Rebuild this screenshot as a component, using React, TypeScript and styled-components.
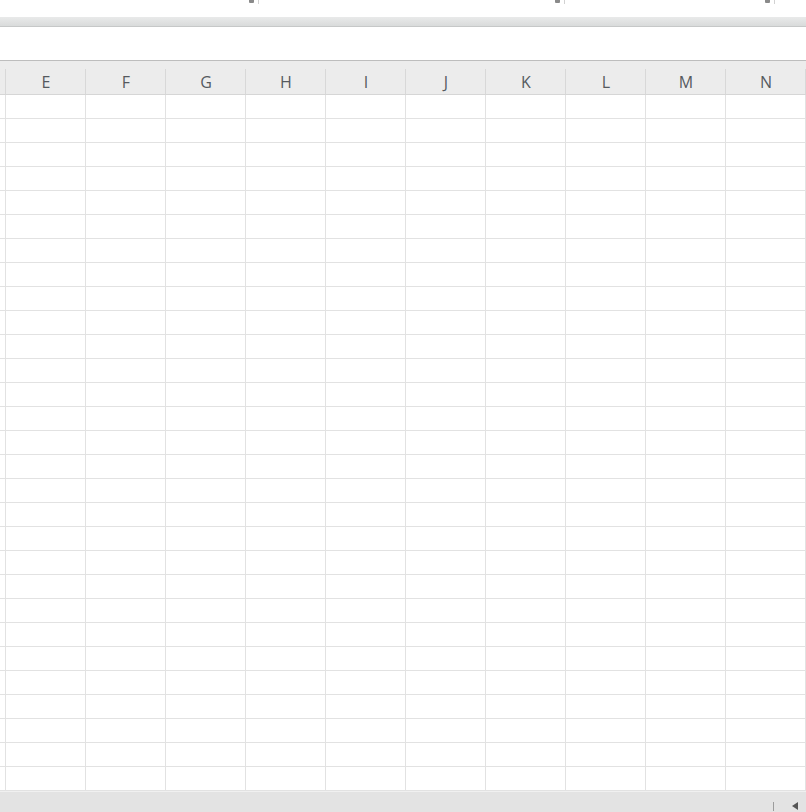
import React from "react";
import styled, { createGlobalStyle } from "styled-components";

const GlobalStyle = createGlobalStyle`
  html, body {
    margin: 0;
    padding: 0;
    background: #ffffff;
    overflow: hidden;
  }
  body {
    font-family: "Open Sans", "Liberation Sans", sans-serif;
  }
`;

const Page = styled.div`
  width: 806px;
  height: 812px;
  display: flex;
  flex-direction: column;
  overflow: hidden;
  background: #ffffff;
`;

const Ribbon = styled.div`
  height: 17px;
  display: flex;
  background: #ffffff;
`;

const RibbonGroup = styled.div<{ $w: number }>`
  width: ${(p) => p.$w}px;
  display: flex;
  justify-content: flex-end;
  align-items: flex-start;
  gap: 4px;
`;

const Launcher = styled.span`
  width: 5px;
  height: 3px;
  background: #8a8a8a;
  border-radius: 0 0 1px 1px;
`;

const GroupDivider = styled.span`
  width: 1px;
  height: 4px;
  background: #d2d2d2;
`;

const RibbonShadow = styled.div`
  height: 9px;
  background: linear-gradient(#e9eaea, #d9dbdb);
  border-bottom: 1px solid #c6c8c8;
`;

const FormulaArea = styled.div`
  height: 33px;
  background: #ffffff;
  border-bottom: 1px solid #bdbdbd;
`;

const HeaderRow = styled.div`
  display: flex;
  height: 33px;
  background: #ececec;
  border-bottom: 1px solid #d6d6d6;
`;

const HeaderStub = styled.div`
  width: 5px;
  position: relative;
  &::after {
    content: "";
    position: absolute;
    right: -1px;
    top: 8px;
    bottom: 0;
    width: 1px;
    background: #d8d8d8;
  }
`;

const HeaderCell = styled.div`
  width: 79px;
  margin-left: 1px;
  position: relative;
  display: flex;
  align-items: center;
  justify-content: center;
  padding: 8px 0 0 1px;
  box-sizing: border-box;
  font-size: 16px;
  color: #555a5f;
  font-weight: 400;
  &::after {
    content: "";
    position: absolute;
    right: -1px;
    top: 8px;
    bottom: 0;
    width: 1px;
    background: #d8d8d8;
  }
`;

const Sheet = styled.div`
  display: flex;
  flex-direction: column;
`;

const Row = styled.div`
  display: flex;
  height: 23px;
  border-bottom: 1px solid #e2e2e2;
`;

const Stub = styled.div`
  width: 5px;
  border-right: 1px solid #e2e2e2;
`;

const Cell = styled.div`
  width: 79px;
  border-right: 1px solid #e2e2e2;
`;

const StatusBar = styled.div`
  flex: 1;
  display: flex;
  align-items: center;
  justify-content: flex-end;
  gap: 18px;
  padding: 0 8px 0 0;
  background: #e3e3e3;
  border-top: 1px solid #f0f0f0;
`;

const Tick = styled.span`
  width: 1px;
  height: 9px;
  margin-top: 8px;
  background: #9c9c9c;
`;

const ScrollLeft = styled.svg`
  width: 6px;
  height: 8px;
  margin-top: 8px;
`;

const columns = ["E", "F", "G", "H", "I", "J", "K", "L", "M", "N"];
const rows = Array.from({ length: 29 }, (_, i) => i);

const App: React.FC = () => {
  return (
    <>
      <GlobalStyle />
      <Page>
        <Ribbon>
          <RibbonGroup $w={259}>
            <Launcher />
            <GroupDivider />
          </RibbonGroup>
          <RibbonGroup $w={306}>
            <Launcher />
            <GroupDivider />
          </RibbonGroup>
          <RibbonGroup $w={210}>
            <Launcher />
            <GroupDivider />
          </RibbonGroup>
        </Ribbon>
        <RibbonShadow />
        <FormulaArea />
        <HeaderRow>
          <HeaderStub />
          {columns.map((c) => (
            <HeaderCell key={c}>{c}</HeaderCell>
          ))}
        </HeaderRow>
        <Sheet>
          {rows.map((r) => (
            <Row key={r}>
              <Stub />
              {columns.map((c) => (
                <Cell key={c} />
              ))}
            </Row>
          ))}
        </Sheet>
        <StatusBar>
          <Tick />
          <ScrollLeft viewBox="0 0 6 8">
            <path d="M6 0 L0 4 L6 8 Z" fill="#555555" />
          </ScrollLeft>
        </StatusBar>
      </Page>
    </>
  );
};

export default App;
